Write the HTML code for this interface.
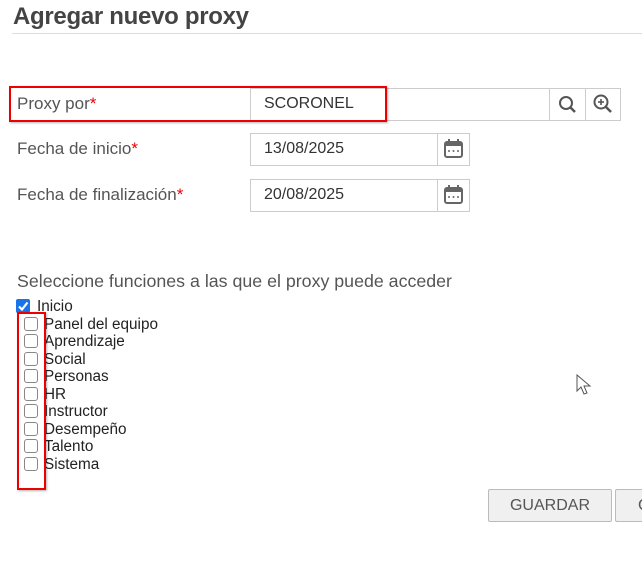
<!DOCTYPE html>
<html><head><meta charset="utf-8"><style>
*{box-sizing:border-box}
body{margin:0;width:642px;height:584px;background:#fff;font-family:"Liberation Sans",Arial,sans-serif;position:relative;overflow:hidden;color:#555}
.a{position:absolute}
h1{position:absolute;left:13px;top:3px;margin:0;font-size:24px;font-weight:bold;color:#444;letter-spacing:-0.3px}
.lbl{font-size:17px;color:#555}
.req{color:#e00}
.inp{border:1px solid #ccc;background:#fff;font-size:16px;color:#333;padding-left:13px;line-height:30px}
.btn{border:1px solid #ccc;background:#fff}
.cb{width:14px;height:14px;border:1px solid #888;border-radius:3px;background:#fff}
.it{font-size:15.3px;color:#222}
</style></head><body>
<h1>Agregar nuevo proxy</h1>
<div class="a" style="left:12px;top:33px;width:630px;height:1px;background:#ddd"></div>

<div class="a inp" style="left:250px;top:88px;width:300px;height:33px">SCORONEL</div>
<div class="a btn" style="left:549px;top:88px;width:37px;height:33px"><svg width="35" height="31"><circle cx="16" cy="14" r="6" fill="none" stroke="#555" stroke-width="2"/><line x1="20" y1="18" x2="25" y2="23" stroke="#555" stroke-width="2.5"/></svg></div>
<div class="a btn" style="left:585px;top:88px;width:36px;height:33px"><svg width="34" height="31"><circle cx="15" cy="13" r="6.5" fill="none" stroke="#555" stroke-width="2"/><line x1="20" y1="18" x2="25" y2="23" stroke="#555" stroke-width="2.5"/><line x1="12" y1="13" x2="18" y2="13" stroke="#555" stroke-width="1.6"/><line x1="15" y1="10" x2="15" y2="16" stroke="#555" stroke-width="1.6"/></svg></div>
<div class="a" style="left:9px;top:86px;width:378px;height:36px;border:2px solid #e00;box-shadow:1px 1px 2px rgba(0,0,0,.3)"></div>
<div class="a lbl" style="left:17px;top:94px">Proxy por<span class="req">*</span></div>

<div class="a lbl" style="left:17px;top:139px">Fecha de inicio<span class="req">*</span></div>
<div class="a inp" style="left:250px;top:133px;width:188px;height:33px">13/08/2025</div>
<div class="a btn" style="left:437px;top:133px;width:33px;height:33px"><svg width="31" height="31"><rect x="7" y="8" width="17" height="15" rx="2" fill="none" stroke="#666" stroke-width="2"/><rect x="7" y="8" width="17" height="4" fill="#666"/><rect x="10" y="5" width="2" height="4" fill="#666"/><rect x="19" y="5" width="2" height="4" fill="#666"/><circle cx="11" cy="17" r="1" fill="#666"/><circle cx="15.5" cy="17" r="1" fill="#666"/><circle cx="20" cy="17" r="1" fill="#666"/></svg></div>

<div class="a lbl" style="left:17px;top:185px">Fecha de finalización<span class="req">*</span></div>
<div class="a inp" style="left:250px;top:179px;width:188px;height:33px">20/08/2025</div>
<div class="a btn" style="left:437px;top:179px;width:33px;height:33px"><svg width="31" height="31"><rect x="7" y="8" width="17" height="15" rx="2" fill="none" stroke="#666" stroke-width="2"/><rect x="7" y="8" width="17" height="4" fill="#666"/><rect x="10" y="5" width="2" height="4" fill="#666"/><rect x="19" y="5" width="2" height="4" fill="#666"/><circle cx="11" cy="17" r="1" fill="#666"/><circle cx="15.5" cy="17" r="1" fill="#666"/><circle cx="20" cy="17" r="1" fill="#666"/></svg></div>

<div class="a lbl" style="left:17px;top:271px;font-size:17.8px">Seleccione funciones a las que el proxy puede acceder</div>

<div class="a" style="left:16px;top:299px;width:14px;height:14px;background:#1a73e8;border-radius:2px"><svg width="14" height="14"><path d="M3 7.5 L6 10.5 L11.5 3.5" fill="none" stroke="#fff" stroke-width="2.2"/></svg></div>
<div class="a it" style="left:37px;top:298px">Inicio</div>

<div class="a cb" style="left:24px;top:317px"></div><div class="a it" style="left:44px;top:316px">Panel del equipo</div>
<div class="a cb" style="left:24px;top:334px"></div><div class="a it" style="left:44px;top:333px">Aprendizaje</div>
<div class="a cb" style="left:24px;top:352px"></div><div class="a it" style="left:44px;top:351px">Social</div>
<div class="a cb" style="left:24px;top:369px"></div><div class="a it" style="left:44px;top:368px">Personas</div>
<div class="a cb" style="left:24px;top:387px"></div><div class="a it" style="left:44px;top:386px">HR</div>
<div class="a cb" style="left:24px;top:404px"></div><div class="a it" style="left:44px;top:403px">Instructor</div>
<div class="a cb" style="left:24px;top:422px"></div><div class="a it" style="left:44px;top:421px">Desempeño</div>
<div class="a cb" style="left:24px;top:439px"></div><div class="a it" style="left:44px;top:438px">Talento</div>
<div class="a cb" style="left:24px;top:457px"></div><div class="a it" style="left:44px;top:456px">Sistema</div>
<div class="a" style="left:17px;top:312px;width:29px;height:178px;border:2px solid #e00;box-shadow:1px 1px 2px rgba(0,0,0,.3)"></div>

<svg class="a" style="left:575px;top:374px" width="18" height="24"><path d="M2 1 L2 17 L6 13 L9 20 L12 19 L9 12 L15 12 Z" fill="#fff" stroke="#555" stroke-width="1"/></svg>

<div class="a" style="left:488px;top:489px;width:124px;height:33px;border:1px solid #bbb;border-radius:2px;background:#f0f0f0;font-size:16px;color:#555;text-align:center;line-height:31px">GUARDAR</div>
<div class="a" style="left:615px;top:489px;width:40px;height:33px;border:1px solid #bbb;border-radius:2px;background:#f0f0f0;font-size:16px;color:#555;line-height:31px;padding-left:22px">C</div>
</body></html>
